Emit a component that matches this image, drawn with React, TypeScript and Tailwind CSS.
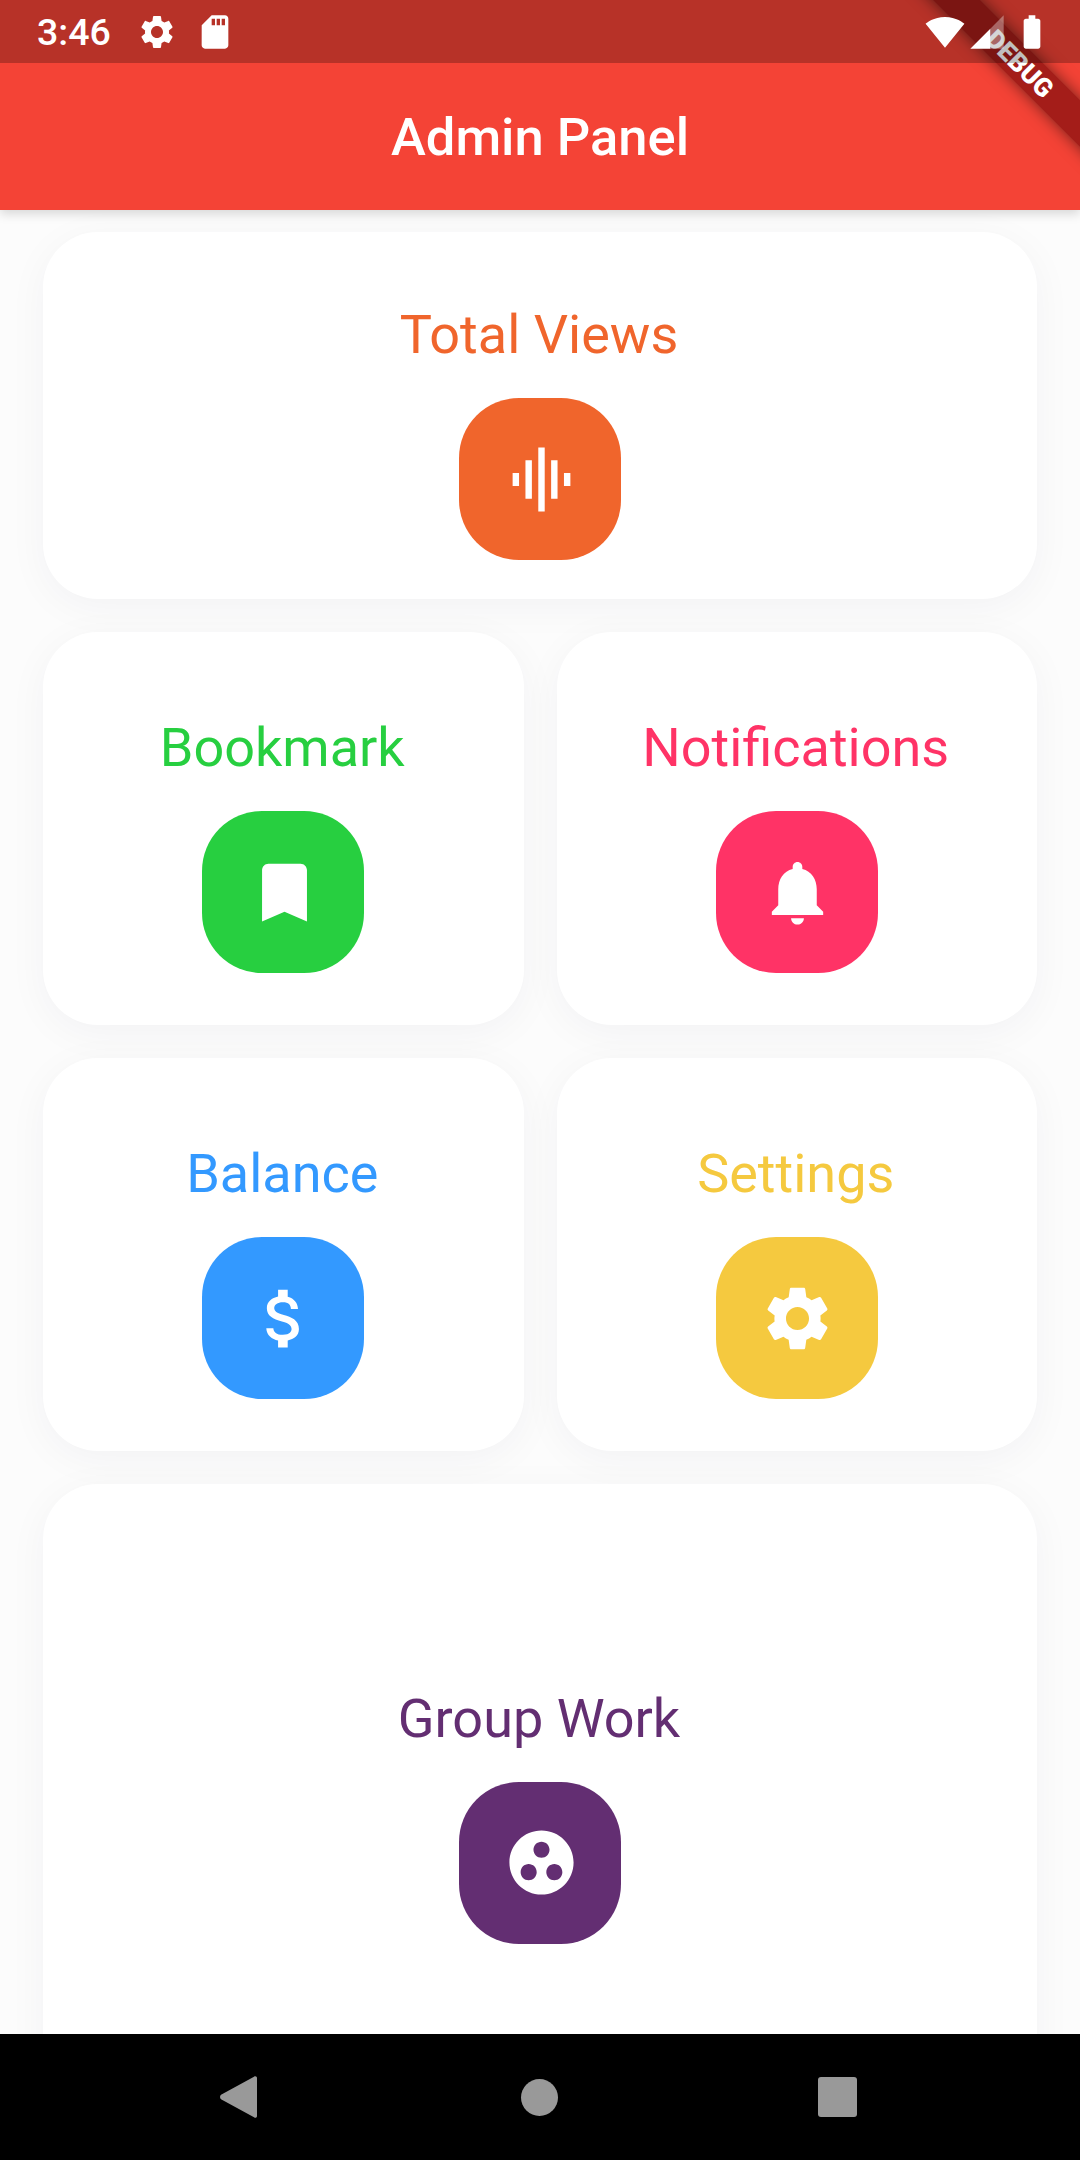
import React from 'react';

const Icon = ({ d, size, className }: { d: string; size: number; className?: string }) => (
  <svg width={size} height={size} viewBox="0 0 24 24" fill="white" className={className}>
    <path d={d} />
  </svg>
);

const icons = {
  settings:
    'M19.14 12.94c.04-.3.06-.61.06-.94 0-.32-.02-.64-.07-.94l2.03-1.58c.18-.14.23-.41.12-.61l-1.92-3.32c-.12-.22-.37-.29-.59-.22l-2.39.96c-.5-.38-1.03-.7-1.62-.94l-.36-2.54c-.04-.24-.24-.41-.48-.41h-3.84c-.24 0-.43.17-.47.41l-.36 2.54c-.59.24-1.13.57-1.62.94l-2.39-.96c-.22-.08-.47 0-.59.22L2.74 8.87c-.12.21-.08.47.12.61l2.03 1.58c-.05.3-.09.63-.09.94s.02.64.07.94l-2.03 1.58c-.18.14-.23.41-.12.61l1.92 3.32c.12.22.37.29.59.22l2.39-.96c.5.38 1.03.7 1.62.94l.36 2.54c.05.24.24.41.48.41h3.84c.24 0 .44-.17.47-.41l.36-2.54c.59-.24 1.13-.56 1.62-.94l2.39.96c.22.08.47 0 .59-.22l1.92-3.32c.12-.22.07-.47-.12-.61l-2.01-1.58zM12 15.6c-1.98 0-3.6-1.62-3.6-3.6s1.62-3.6 3.6-3.6 3.6 1.62 3.6 3.6-1.62 3.6-3.6 3.6z',
  sdCard:
    'M18 2h-8L4.02 8 4 20c0 1.1.9 2 2 2h12c1.1 0 2-.9 2-2V4c0-1.1-.9-2-2-2zm-6 6h-2V4h2v4zm3 0h-2V4h2v4zm3 0h-2V4h2v4z',
  wifi: 'M12.01 21.49L23.64 7c-.45-.34-4.93-4-11.64-4C5.28 3 .81 6.66.36 7l11.64 14.49.01.01.01-.01z',
  battery:
    'M15.67 4H14V2h-4v2H8.33C7.6 4 7 4.6 7 5.33v15.33C7 21.4 7.6 22 8.33 22h7.33c.74 0 1.34-.6 1.34-1.33V5.33C17 4.6 16.4 4 15.67 4z',
  graphicEq: 'M7 18h2V6H7v12zm4 4h2V2h-2v20zm-8-8h2v-4H3v4zm12 4h2V6h-2v12zm4-8v4h2v-4h-2z',
  bookmark: 'M17 3H7c-1.1 0-1.99.9-1.99 2L5 21l7-3 7 3V5c0-1.1-.9-2-2-2z',
  bell: 'M12 22c1.1 0 2-.9 2-2h-4c0 1.1.89 2 2 2zm6-6v-5c0-3.07-1.64-5.64-4.5-6.32V4c0-.83-.67-1.5-1.5-1.5s-1.5.67-1.5 1.5v.68C7.63 5.36 6 7.92 6 11v5l-2 2v1h16v-1l-2-2z',
  money:
    'M11.8 10.9c-2.27-.59-3-1.2-3-2.15 0-1.09 1.01-1.85 2.7-1.85 1.78 0 2.44.85 2.5 2.1h2.21c-.07-1.72-1.12-3.3-3.21-3.81V3h-3v2.16c-1.94.42-3.5 1.68-3.5 3.61 0 2.31 1.91 3.46 4.7 4.13 2.5.6 3 1.48 3 2.41 0 .69-.49 1.79-2.7 1.79-2.06 0-2.87-.92-2.98-2.1h-2.2c.12 2.19 1.76 3.42 3.68 3.83V21h3v-2.15c1.95-.37 3.5-1.5 3.5-3.55 0-2.84-2.43-3.81-4.7-4.4z',
  groupWork:
    'M12 2C6.48 2 2 6.48 2 12s4.48 10 10 10 10-4.48 10-10S17.52 2 12 2zM8 17.5c-1.38 0-2.5-1.12-2.5-2.5s1.12-2.5 2.5-2.5 2.5 1.12 2.5 2.5-1.12 2.5-2.5 2.5zM9.5 8c0-1.38 1.12-2.5 2.5-2.5s2.5 1.12 2.5 2.5-1.12 2.5-2.5 2.5S9.5 9.38 9.5 8zm6.5 9.5c-1.38 0-2.5-1.12-2.5-2.5s1.12-2.5 2.5-2.5 2.5 1.12 2.5 2.5-1.12 2.5-2.5 2.5z',
};

const Card = ({
  title,
  icon,
  textClass,
  tileClass,
  heightClass,
}: {
  title: string;
  icon: string;
  textClass: string;
  tileClass: string;
  heightClass: string;
}) => (
  <div
    className={`flex flex-col items-center justify-center pt-[34px] bg-white rounded-[55px] shadow-[0_8px_40px_rgba(20,20,70,0.045)] ${heightClass}`}
  >
    <p className={`text-[54px] leading-[58px] translate-y-[1px] -translate-x-[1px] ${textClass}`}>{title}</p>
    <div className={`mt-[35px] w-[162px] h-[162px] rounded-[60px] flex items-center justify-center ${tileClass}`}>
      <Icon d={icon} size={77} className="translate-x-[1px]" />
    </div>
  </div>
);

const App = () => {
  return (
    <div className="relative w-[1080px] h-[2160px] overflow-hidden flex flex-col bg-[#fcfcfc] font-[Roboto,sans-serif]">
      <header className="relative shrink-0 bg-[#f44336] shadow-[0_4px_10px_rgba(0,0,0,0.15)]">
        <div className="relative z-30 h-[63px] bg-black/25 flex items-center pl-[37px] pr-[28px] text-white">
          <span className="text-[37.5px] font-medium leading-none w-[74px] pt-[2px]">3:46</span>
          <Icon d={icons.settings} size={40} className="ml-[26px]" />
          <Icon d={icons.sdCard} size={40} className="ml-[18px]" />
          <div className="ml-auto flex items-center">
            <Icon d={icons.wifi} size={40} />
            <svg width="40" height="40" viewBox="0 0 24 24" className="ml-[2px]">
              <path d="M2 22h12V10z" fill="white" />
              <path d="M14 22h8V2l-8 8z" fill="white" fillOpacity="0.35" />
            </svg>
            <Icon d={icons.battery} size={40} className="ml-[5px]" />
          </div>
        </div>
        <div className="h-[147px] flex items-center justify-center">
          <h1 className="text-[52.5px] font-medium text-white leading-none pt-[2px]">Admin Panel</h1>
        </div>
      </header>

      <main className="flex-1 min-h-0 overflow-hidden px-[43px] pt-[22px] flex flex-col gap-[33px]">
        <Card title="Total Views" icon={icons.graphicEq} textClass="text-[#f0652c]" tileClass="bg-[#f0652c]" heightClass="h-[367px] shrink-0" />
        <div className="grid grid-cols-2 gap-x-[33px] shrink-0">
          <Card title="Bookmark" icon={icons.bookmark} textClass="text-[#27cf40]" tileClass="bg-[#27cf40]" heightClass="h-[393px]" />
          <Card title="Notifications" icon={icons.bell} textClass="text-[#ff3366]" tileClass="bg-[#ff3366]" heightClass="h-[393px]" />
        </div>
        <div className="grid grid-cols-2 gap-x-[33px] shrink-0">
          <Card title="Balance" icon={icons.money} textClass="text-[#3399ff]" tileClass="bg-[#3399ff]" heightClass="h-[393px]" />
          <Card title="Settings" icon={icons.settings} textClass="text-[#f5c93f]" tileClass="bg-[#f5c93f]" heightClass="h-[393px]" />
        </div>
        <Card title="Group Work" icon={icons.groupWork} textClass="text-[#632e72]" tileClass="bg-[#632e72]" heightClass="h-[630px] shrink-0" />
      </main>

      <nav className="shrink-0 h-[126px] bg-black relative z-10 flex items-center justify-center">
        <svg width="37" height="42" viewBox="0 0 37 42" fill="#999999" className="-ml-[3px]">
          <path d="M37 2c0-1.6-1.6-2.4-3-1.3L1 18.8c-1.3 1-1.3 3.4 0 4.4l33 18.1c1.4 1.1 3 .3 3-1.3z" />
        </svg>
        <div className="ml-[264px] w-[37px] h-[37px] rounded-full bg-[#999999]" />
        <div className="ml-[260px] w-[39px] h-[40px] rounded-[3px] bg-[#999999]" />
      </nav>

      <div className="absolute z-20 left-[870px] top-[47px] w-[300px] h-[33px] rotate-45 bg-[#a41d19] shadow-[0_0_16px_rgba(0,0,0,0.55)] flex items-center justify-center">
        <span className="text-[26px] font-black leading-none text-white">DEBUG</span>
      </div>
    </div>
  );
};

export default App;
